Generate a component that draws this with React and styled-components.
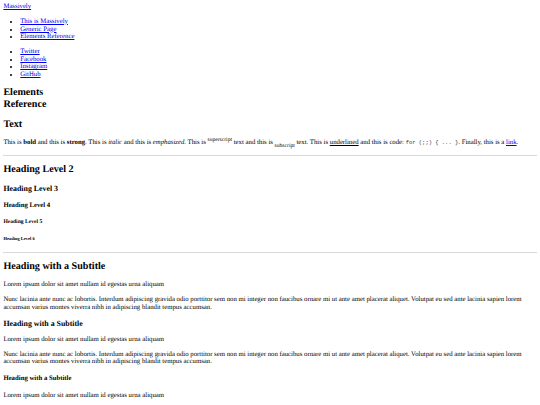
import styled, { createGlobalStyle } from 'styled-components';

// page is the unstyled template, shown at 540/1280 of its size
const GlobalStyle = createGlobalStyle`
  html, body {
    background: #fff;
  }
  body {
    margin: 3.375px;
    font-family: "Liberation Serif", "Times New Roman", serif;
    font-size: 6.75px;
    line-height: 1.15;
    color: #000;
    text-rendering: geometricPrecision;
  }
`;

const Wrapper = styled.div``;

const Link = styled.a`
  color: #0000ee;
  text-decoration: underline;
`;

const LinkList = styled.ul`
  margin: 1em 0;
  padding-left: 16.875px;
  list-style: disc;

  li {
    display: list-item;
  }
`;

const Post = styled.section``;

const Title = styled.h1`
  font-size: 1.5em;
  font-weight: bold;
  margin: 0.83em 0;
`;

const H2 = styled.h2`
  font-size: 1.5em;
  font-weight: bold;
  margin: 0.83em 0;
`;

const H3 = styled.h3`
  font-size: 1.17em;
  font-weight: bold;
  margin: 1em 0;
`;

const H4 = styled.h4`
  font-size: 1em;
  font-weight: bold;
  margin: 1.33em 0;
`;

const H5 = styled.h5`
  font-size: 0.83em;
  font-weight: bold;
  margin: 1.67em 0;
`;

const H6 = styled.h6`
  font-size: 0.67em;
  font-weight: bold;
  margin: 2.33em 0;
`;

const Para = styled.p`
  margin: 1em 0;

  sup, sub {
    font-size: 0.83em;
    line-height: 0.6;
  }
`;

const Code = styled.code`
  font-family: "Liberation Mono", "Courier New", monospace;
  font-size: 0.8125em;
  color: #333;
`;

const Rule = styled.hr`
  margin: 0.5em 0;
  height: 0;
  border: none;
  border-top: 1px solid #d9d9d9;
`;

const lorem = 'Lorem ipsum dolor sit amet nullam id egestas urna aliquam';
const nunc =
  'Nunc lacinia ante nunc ac lobortis. Interdum adipiscing gravida odio porttitor sem non mi integer non faucibus ornare mi ut ante amet placerat aliquet. Volutpat eu sed ante lacinia sapien lorem accumsan varius montes viverra nibh in adipiscing blandit tempus accumsan.';

const pages = ['This is Massively', 'Generic Page', 'Elements Reference'];
const socials = ['Twitter', 'Facebook', 'Instagram', 'GitHub'];

export default function App() {
  return (
    <Wrapper>
      <GlobalStyle />
      <header>
        <Link href="#">Massively</Link>
      </header>
      <nav>
        <LinkList>
          {pages.map(p => (
            <li key={p}><Link href="#">{p}</Link></li>
          ))}
        </LinkList>
        <LinkList>
          {socials.map(s => (
            <li key={s}><Link href="#">{s}</Link></li>
          ))}
        </LinkList>
      </nav>
      <Post>
        <header>
          <Title>Elements<br />Reference</Title>
        </header>

        <H2>Text</H2>
        <Para>
          This is <b>bold</b> and this is <strong>strong</strong>. This is <i>italic</i> and
          this is <em>emphasized</em>. This is <sup>superscript</sup> text and this
          is <sub>subscript</sub> text. This is <u>underlined</u> and this is
          code: <Code>for (;;) {'{'} ... {'}'}</Code>. Finally, this is a <Link href="#">link</Link>.
        </Para>

        <Rule />

        <H2>Heading Level 2</H2>
        <H3>Heading Level 3</H3>
        <H4>Heading Level 4</H4>
        <H5>Heading Level 5</H5>
        <H6>Heading Level 6</H6>

        <Rule />

        <header>
          <H2>Heading with a Subtitle</H2>
          <Para>{lorem}</Para>
        </header>
        <Para>{nunc}</Para>
        <header>
          <H3>Heading with a Subtitle</H3>
          <Para>{lorem}</Para>
        </header>
        <Para>{nunc}</Para>
        <header>
          <H4>Heading with a Subtitle</H4>
          <Para>{lorem}</Para>
        </header>
        <Para>{nunc}</Para>
      </Post>
    </Wrapper>
  );
}
